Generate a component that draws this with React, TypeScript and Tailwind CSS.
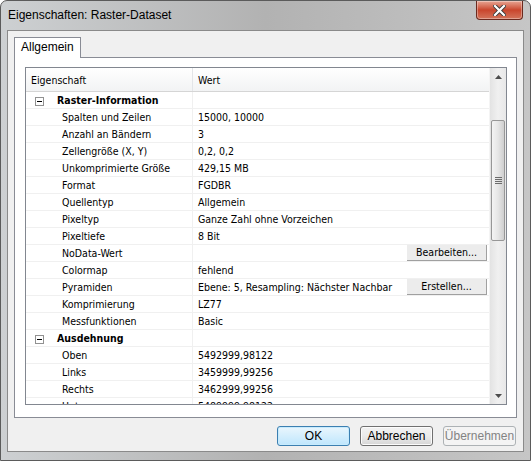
import React from 'react';

type Row = { group?: string; label?: string; value?: string; action?: string };

const ROWS: Row[] = [
  { group: 'Raster-Information' },
  { label: 'Spalten und Zeilen', value: '15000, 10000' },
  { label: 'Anzahl an Bändern', value: '3' },
  { label: 'Zellengröße (X, Y)', value: '0,2, 0,2' },
  { label: 'Unkomprimierte Größe', value: '429,15 MB' },
  { label: 'Format', value: 'FGDBR' },
  { label: 'Quellentyp', value: 'Allgemein' },
  { label: 'Pixeltyp', value: 'Ganze Zahl ohne Vorzeichen' },
  { label: 'Pixeltiefe', value: '8 Bit' },
  { label: 'NoData-Wert', value: '', action: 'Bearbeiten...' },
  { label: 'Colormap', value: 'fehlend' },
  { label: 'Pyramiden', value: 'Ebene: 5, Resampling: Nächster Nachbar', action: 'Erstellen...' },
  { label: 'Komprimierung', value: 'LZ77' },
  { label: 'Messfunktionen', value: 'Basic' },
  { group: 'Ausdehnung' },
  { label: 'Oben', value: '5492999,98122' },
  { label: 'Links', value: '3459999,99256' },
  { label: 'Rechts', value: '3462999,99256' },
  { label: 'Unten', value: '5489999,98122' },
];

const listFont = "font-['DejaVu_Sans_Condensed',sans-serif] text-[10.5px]";
const uiFont = "font-['Liberation_Sans',Arial,sans-serif] text-[12px]";

function MinusBox() {
  return (
    <span className="w-[9px] h-[9px] border border-[#919191] bg-white flex items-center justify-center">
      <span className="w-[5px] h-px bg-black" />
    </span>
  );
}

function ScrollBar() {
  return (
    <div className="w-[17px] flex-shrink-0 bg-gradient-to-r from-[#e3e3e3] via-[#f0f0f0] to-[#e8e8e8] flex flex-col border-l border-[#f4f4f4]">
      <div className="h-[17px] flex items-center justify-center">
        <svg width="7" height="4" viewBox="0 0 7 4"><path d="M3.5 0 L7 4 L0 4 Z" fill="#4d4d4d" /></svg>
      </div>
      <div className="h-[35px]" />
      <div className="h-[121px] mx-px rounded-[2px] border border-[#979797] bg-gradient-to-r from-[#f4f4f4] via-[#e6e6e6] to-[#cfcfcf] flex items-center justify-center">
        <div className="flex flex-col gap-px">
          <span className="w-[7px] h-px bg-[#6c6c6c]" />
          <span className="w-[7px] h-px bg-[#6c6c6c]" />
          <span className="w-[7px] h-px bg-[#6c6c6c]" />
          <span className="w-[7px] h-px bg-[#6c6c6c]" />
        </div>
      </div>
      <div className="flex-1" />
      <div className="h-[17px] flex items-center justify-center">
        <svg width="7" height="4" viewBox="0 0 7 4"><path d="M0 0 L7 0 L3.5 4 Z" fill="#4d4d4d" /></svg>
      </div>
    </div>
  );
}

export default function App() {
  return (
    <div className="w-[531px] h-[461px] bg-white">
      <div className="w-[531px] h-[461px] flex flex-col rounded-t-[7px] border border-[#5b5b5b] bg-gradient-to-r from-[#cdd0d2] via-[#b2b2b2] to-[#c6c6c6] overflow-hidden">
        {/* Title bar */}
        <div className="h-[29px] flex items-start justify-between">
          <p className={`${uiFont} text-black pl-[7px] pt-[7px] leading-[15px]`}>Eigenschaften: Raster-Dataset</p>
          <div className="mr-[7px] w-[47px] h-[19px] rounded-b-[4px] border border-t-0 border-[#6b2a1f] bg-gradient-to-b from-[#e6a493] via-[#c9452c] to-[#d3735a] flex items-center justify-center shadow-[inset_0_0_0_1px_rgba(255,255,255,0.35)]">
            <svg width="13" height="11" viewBox="0 0 13 11">
              <path d="M2 1 L11 10 M11 1 L2 10" stroke="#3a3a3a" strokeWidth="4" strokeLinecap="square" />
              <path d="M2 1 L11 10 M11 1 L2 10" stroke="#ffffff" strokeWidth="2.2" strokeLinecap="square" />
            </svg>
          </div>
        </div>

        {/* Client area */}
        <div className="flex-1 mx-[6px] mb-[8px] border border-[#8a8a8a] bg-[#f0f0f0] flex flex-col pl-[6px] pr-[6px] pt-[6px]">
          {/* Tab */}
          <div className="flex">
            <div className={`${uiFont} h-[21px] px-[6px] bg-white border border-b-0 border-[#898c95] leading-[19px] text-black relative z-10 -mb-px pb-px`}>
              Allgemein
            </div>
          </div>
          {/* Tab panel */}
          <div className="h-[361px] border border-[#898c95] bg-white pt-[9px] pl-[10px] pr-[9px]">
            <div className="h-[338px] border border-[#828790] bg-white flex overflow-hidden">
              <div className={`${listFont} flex-1 min-w-0 flex flex-col text-black`}>
                {/* Header */}
                <div className="h-[24px] flex-shrink-0 flex bg-gradient-to-b from-[#ffffff] to-[#f2f3f4] border-b border-[#d5d5d5]">
                  <div className="w-[167px] border-r border-[#e3e5e8] pl-[5px] pt-[2px] flex items-center">Eigenschaft</div>
                  <div className="flex-1 pl-[5px] pt-[2px] flex items-center">Wert</div>
                </div>
                {ROWS.map((r, i) =>
                  r.group ? (
                    <div key={i} className="h-[17px] flex-shrink-0 flex border-b border-[#f0f0f0]">
                      <div className="w-[167px] border-r border-[#f0f0f0] flex items-center pl-[9px] pt-[2px] gap-[13px]">
                        <MinusBox />
                        <span className="font-bold">{r.group}</span>
                      </div>
                      <div className="flex-1" />
                    </div>
                  ) : (
                    <div key={i} className="h-[17px] flex-shrink-0 flex border-b border-[#f0f0f0]">
                      <div className="w-[167px] border-r border-[#f0f0f0] flex items-center pl-[36px] pt-[2px] whitespace-nowrap">{r.label}</div>
                      <div className="flex-1 flex items-center justify-between pl-[5px] pr-[2px] whitespace-nowrap">
                        <span className="pt-[2px]">{r.value}</span>
                        {r.action && (
                          <span className="w-[80px] h-[16px] bg-[#ececec] border-r border-b border-[#a0a0a0] flex items-center justify-center pt-px">
                            {r.action}
                          </span>
                        )}
                      </div>
                    </div>
                  )
                )}
              </div>
              <ScrollBar />
            </div>
          </div>

          {/* Buttons */}
          <div className={`${uiFont} flex justify-end gap-[10px] mt-[8px] pr-px`}>
            <button className="w-[73px] h-[20px] rounded-[3px] border border-[#3c7fb1] bg-gradient-to-b from-[#eaf6fd] to-[#bee6fd] shadow-[inset_0_0_0_1px_#c7ebfd] text-black leading-none">OK</button>
            <button className="w-[73px] h-[20px] rounded-[3px] border border-[#707070] bg-gradient-to-b from-[#f2f2f2] via-[#ebebeb] to-[#d6d6d6] shadow-[inset_0_0_0_1px_#fcfcfc] text-black leading-none">Abbrechen</button>
            <button className="w-[73px] h-[20px] rounded-[3px] border border-[#adb2b5] bg-[#f4f4f4] text-[#838383] leading-none">Übernehmen</button>
          </div>
        </div>
      </div>
    </div>
  );
}
